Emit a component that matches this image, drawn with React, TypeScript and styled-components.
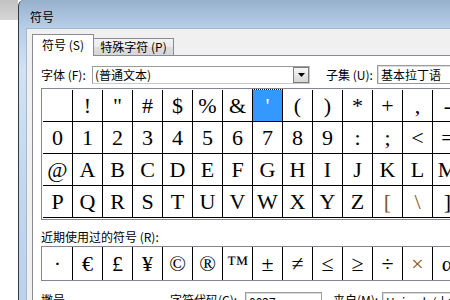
import styled, { createGlobalStyle } from "styled-components";

const GlobalStyle = createGlobalStyle`
  html, body {
    margin: 0;
    width: 450px;
    height: 300px;
    overflow: hidden;
    background: #fff;
  }
  body {
    font-family: "Noto Sans CJK SC", "Liberation Sans", sans-serif;
    font-size: 12px;
    color: #000;
  }
`;

const Screen = styled.div`
  display: flex;
  width: 450px;
  height: 300px;
  overflow: hidden;
`;

const Desktop = styled.div`
  flex: none;
  width: 18px;
  background: linear-gradient(180deg, #c2c2c2 0, #d6d6d6 20px, #ffffff 20px);
`;

const Window = styled.div`
  flex: none;
  width: 560px;
  display: flex;
  flex-direction: column;
  border-left: 1px solid #2f3a46;
  border-top-left-radius: 6px;
  background: linear-gradient(
    180deg,
    #97b1cd 0,
    #b7cee8 28px,
    #d2e2f3 70px,
    #c4d8ef 170px,
    #bcd2eb 300px
  );
`;

const TitleBar = styled.div`
  flex: none;
  height: 28px;
  box-sizing: border-box;
  display: flex;
  align-items: center;
  padding: 5px 0 0 11px;
  line-height: 14px;
`;

const FrameBody = styled.div`
  flex: 1;
  min-height: 0;
  display: flex;
  padding-left: 7px;
`;

const Client = styled.div`
  flex: 1;
  display: flex;
  flex-direction: column;
  background: #f0f0f0;
  border-left: 1px solid #a4b8ce;
  border-top: 1px solid #a4b8ce;
  padding: 5px 0 0 5px;
`;

const Tabs = styled.div`
  flex: none;
  display: flex;
  align-items: flex-end;
  height: 22px;
  position: relative;
  z-index: 1;
  margin-bottom: -1px;
`;

const Tab = styled.div<{ $active?: boolean }>`
  box-sizing: border-box;
  display: flex;
  align-items: center;
  justify-content: center;
  line-height: 14px;
  white-space: nowrap;
  border: 1px solid #898c95;
  ${(p) =>
    p.$active
      ? `
    width: 62px;
    height: 22px;
    border-bottom: none;
    background: #fff;
    padding-bottom: 1px;
  `
      : `
    width: 80px;
    height: 17px;
    margin-bottom: 1px;
    border-left: none;
    border-bottom: none;
    background: linear-gradient(180deg, #f3f3f3 0%, #ebebeb 50%, #dddddd 51%, #d6d6d6 100%);
  `}
`;

const Panel = styled.div`
  flex: none;
  box-sizing: border-box;
  background: #fff;
  border: 1px solid #898c95;
  padding: 9px 0 0 8px;
`;

const FontRow = styled.div`
  display: flex;
  align-items: center;
  height: 19px;
`;

const Label = styled.span<{ $width: number; $gap?: number }>`
  flex: none;
  width: ${(p) => p.$width}px;
  margin-left: ${(p) => p.$gap ?? 0}px;
  line-height: 14px;
  white-space: nowrap;
`;

const Select = styled.div`
  flex: none;
  box-sizing: border-box;
  width: 218px;
  height: 18px;
  display: flex;
  align-items: center;
  justify-content: space-between;
  padding-left: 2px;
  background: #fff;
  border: 1px solid #a5a5a5;
  border-color: #9b9b9b #c9c9c9 #c9c9c9 #9b9b9b;
  line-height: 14px;
`;

const DropButton = styled.div`
  box-sizing: border-box;
  width: 16px;
  height: 16px;
  display: flex;
  align-items: center;
  justify-content: center;
  border: 1px solid #7d7d7d;
  background: linear-gradient(180deg, #f7f7f7, #d6d6d6);
`;

const TextBox = styled.div<{ $width: number; $height: number }>`
  flex: none;
  box-sizing: border-box;
  width: ${(p) => p.$width}px;
  height: ${(p) => p.$height}px;
  display: flex;
  align-items: center;
  padding-left: 3px;
  background: #fff;
  border: 1px solid #9c9c9c;
  box-shadow: inset 1px 1px 0 #dcdcdc;
  line-height: 14px;
  white-space: nowrap;
`;

const CharGrid = styled.div`
  margin-top: 4px;
  width: max-content;
  display: grid;
  grid-template-columns: repeat(16, 30px);
  grid-auto-rows: 32px;
  border: 1px solid #828790;
  border-right: none;
  padding: 1px 0 1px 1px;
`;

const Cell = styled.div<{ $selected?: boolean; $thin?: boolean }>`
  position: relative;
  box-sizing: border-box;
  display: flex;
  align-items: center;
  justify-content: center;
  border-right: 1px solid #000;
  border-bottom: 1px solid #000;
  font-family: "Liberation Serif", "Times New Roman", serif;
  font-size: 22px;
  line-height: 1;
  color: ${(p) => (p.$selected ? "#fff" : p.$thin ? "#8a5424" : "#000")};
  background: ${(p) => (p.$selected ? "#3399ff" : "transparent")};
  ${(p) =>
    p.$selected &&
    `
    &::after {
      content: "";
      position: absolute;
      left: -1px;
      top: -1px;
      right: -1px;
      bottom: -1px;
      border: 1px dotted #000;
    }
  `}
`;

const RecentLabel = styled.div`
  margin-top: 10px;
  line-height: 14px;
  white-space: nowrap;
`;

const RecentRow = styled.div`
  margin-top: 2px;
  width: max-content;
  display: flex;
  border: 1px solid #828790;
  border-right: none;
  padding-left: 1px;
`;

const RecentCell = styled(Cell)`
  width: 30px;
  height: 33px;
  border-bottom: none;
`;

const BottomRow = styled.div`
  margin-top: 11px;
  display: flex;
  align-items: flex-start;
  height: 20px;
  & > span {
    line-height: 16px;
  }
`;

const rows = [
  [" ", "!", '"', "#", "$", "%", "&", "'", "(", ")", "*", "+", ",", "-", ".", "/"],
  "0123456789:;<=>?".split(""),
  "@ABCDEFGHIJKLMNO".split(""),
  "PQRSTUVWXYZ[\\]^_".split(""),
];

const recent = ["·", "€", "£", "¥", "©", "®", "™", "±", "≠", "≤", "≥", "÷", "×", "α", "β", "∞"];

const thin = ["[", "\\", "×"];

const App = () => {
  return (
    <>
      <GlobalStyle />
      <Screen>
        <Desktop />
        <Window>
          <TitleBar>符号</TitleBar>
          <FrameBody>
            <Client>
              <Tabs>
                <Tab $active>符号 (S)</Tab>
                <Tab>特殊字符 (P)</Tab>
              </Tabs>
              <Panel>
                <FontRow>
                  <Label $width={51}>字体 (F):</Label>
                  <Select>
                    <span>(普通文本)</span>
                    <DropButton>
                      <svg width="7" height="4" viewBox="0 0 7 4">
                        <polygon points="0,0 7,0 3.5,4" fill="#000" />
                      </svg>
                    </DropButton>
                  </Select>
                  <Label $width={51} $gap={16}>
                    子集 (U):
                  </Label>
                  <TextBox $width={120} $height={19}>
                    基本拉丁语
                  </TextBox>
                </FontRow>
                <CharGrid>
                  {rows.map((row, r) =>
                    row.map((ch, c) => (
                      <Cell
                        key={`${r}-${c}`}
                        $selected={r === 0 && c === 7}
                        $thin={thin.includes(ch)}
                      >
                        {ch}
                      </Cell>
                    ))
                  )}
                </CharGrid>
                <RecentLabel>近期使用过的符号 (R):</RecentLabel>
                <RecentRow>
                  {recent.map((ch) => (
                    <RecentCell key={ch} $thin={thin.includes(ch)}>
                      {ch}
                    </RecentCell>
                  ))}
                </RecentRow>
                <BottomRow>
                  <Label $width={129}>撇号</Label>
                  <Label $width={75}>字符代码(C):</Label>
                  <TextBox $width={77} $height={20}>
                    0027
                  </TextBox>
                  <Label $width={49} $gap={11}>
                    来自(M):
                  </Label>
                  <TextBox $width={120} $height={20}>
                    Unicode(十六进制)
                  </TextBox>
                </BottomRow>
              </Panel>
            </Client>
          </FrameBody>
        </Window>
      </Screen>
    </>
  );
};

export default App;
